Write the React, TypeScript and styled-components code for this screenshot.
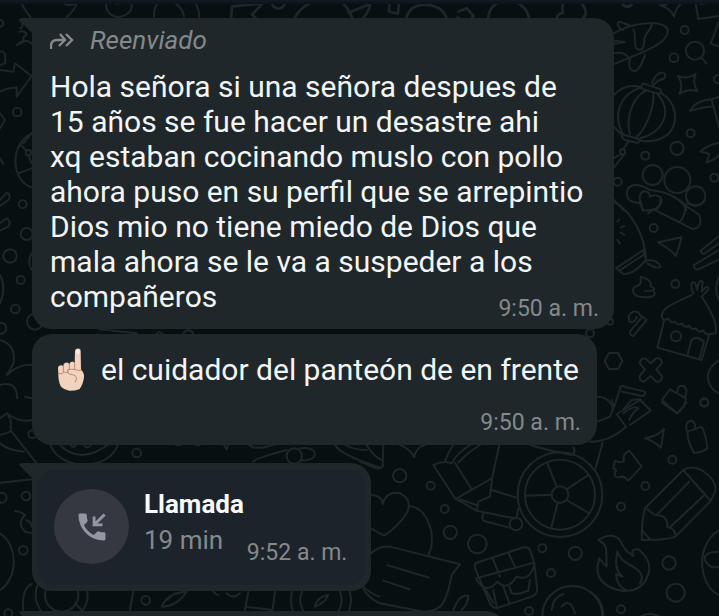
import React from "react";
import styled, { createGlobalStyle } from "styled-components";

const Global = createGlobalStyle`
  * { box-sizing: border-box; }
  html, body { margin: 0; background: #070f10; }
  body { font-family: Roboto, "Liberation Sans", sans-serif; color: #f1f5f6; }
  p, h2 { margin: 0; }
`;

const Chat = styled.main`
  position: relative;
  height: 100vh;
  overflow: hidden;
  padding: 18px 20px 0 32px;
  display: flex;
  flex-direction: column;
  align-items: flex-start;
`;

const Wallpaper = styled.svg`
  position: absolute;
  top: 0;
  left: 0;
  fill: none;
  stroke: #1e262c;
  stroke-width: 6;
  stroke-linecap: round;
  stroke-linejoin: round;
`;

const TopShade = styled.div`
  position: absolute;
  inset: 0 0 auto 0;
  height: 4px;
  background: linear-gradient(#111b22, #0a1316);
`;

const Bubble = styled.article<{ $tail?: boolean; $gap?: number }>`
  position: relative;
  flex: none;
  max-width: 100%;
  margin-top: ${(p) => p.$gap ?? 0}px;
  background: #20272a;
  border-radius: ${(p) => (p.$tail ? "0 20px 20px 20px" : "20px")};

  &::before {
    content: "";
    display: ${(p) => (p.$tail ? "block" : "none")};
    position: absolute;
    top: 0;
    left: -13px;
    width: 14px;
    height: 16px;
    background: inherit;
    border-top-left-radius: 3px;
    clip-path: polygon(0 0, 100% 0, 100% 100%, 0 12%);
  }
`;

const ForwardedBubble = styled(Bubble)`
  width: 582px;
  padding: 5px 15px 6px 18px;
`;

const ShortBubble = styled(Bubble)`
  padding: 18px 16px 8px 18px;
`;

const CallBubble = styled(Bubble)`
  padding: 6px;
`;

const NextBubble = styled(Bubble)`
  width: 474px;
  height: 60px;
`;

const Forwarded = styled.p`
  display: flex;
  align-items: center;
  gap: 16px;
  margin-bottom: 11px;
  font-size: 26px;
  line-height: 35px;
  font-style: italic;
  color: #84898c;
`;

const ForwardIcon = styled.svg`
  width: 24px;
  height: 20px;
  fill: none;
  stroke: #84898c;
  stroke-width: 2.4;
`;

const Body = styled.p`
  display: flow-root;
  font-size: 30px;
  line-height: 35px;
`;

const EmojiBody = styled(Body)`
  display: flex;
  align-items: center;
  padding-right: 2px;
`;

const Emoji = styled.svg`
  flex: none;
  width: 30px;
  height: 47px;
  margin: -6px 15px -6px 6px;
`;

const Time = styled.time`
  display: block;
  text-align: right;
  font-size: 23px;
  line-height: 28px;
  color: #84898c;
  white-space: nowrap;
`;

const InlineTime = styled(Time)`
  float: right;
  margin-top: 16px;
`;

const BelowTime = styled(Time)`
  margin-top: 22px;
`;

const CallPanel = styled.div`
  display: flex;
  align-items: center;
  min-height: 116px;
  padding: 17px 18px 18px 16px;
  border-radius: 16px;
  background: #1d232a;
`;

const CallBadge = styled.span`
  display: flex;
  align-items: center;
  justify-content: center;
  width: 75px;
  height: 75px;
  margin-right: 15px;
  border-radius: 50%;
  background: #353840;
  color: #9297a2;
`;

const CallText = styled.div`
  align-self: flex-start;
  font-size: 26px;
  line-height: 36px;
  color: #84898c;
`;

const CallTitle = styled.h2`
  font-size: 26px;
  line-height: 36px;
  font-weight: 700;
  color: #f7f9fb;
`;

const CallTime = styled(Time)`
  align-self: flex-end;
  margin-left: 3px;
`;

type Doodle = { at: string; d: string; dots: number[][] };

const doodles: Doodle[] = [
  {
    at: "translate(590 0) scale(.3333)",
    d: "M72 100C120 70 215 55 233 88C243 130 150 160 72 192M125 78C105 72 85 60 84 68C82 78 90 88 100 90M130 88C140 100 128 140 142 148C165 155 160 130 165 110C170 95 185 88 186 70M120 175C112 205 125 215 135 213C150 208 158 185 165 165M72 122L105 126L72 132M72 160C95 155 110 160 118 178M334 173L350 191M210 15C230 15 237 12 240 0M275 10C262 18 258 30 252 50C246 32 232 22 210 15M315 0L325 57L387 48M330 12L387 5M387 65L362 130L387 140M264 228Q290 240 317 222Q306 248 322 274Q294 264 268 282Q282 254 264 228ZM72 285C100 255 130 255 155 262M212 278C265 310 265 370 235 402C200 430 160 425 148 420M72 380Q85 397 95 402M152 262C75 290 75 360 98 400M170 270C115 300 110 370 120 402M190 278C195 330 160 395 140 410M205 285C250 340 215 400 150 415M160 250L212 268Q215 280 205 282L155 266Q152 255 160 250ZM95 402L148 418Q150 428 140 428L105 420Q92 412 95 402ZM185 250Q200 215 218 218Q232 222 222 235Q205 240 190 255M115 425L98 450M92 462L72 475M105 460L72 502M300 332Q320 300 365 298L387 290M300 332Q340 322 372 318M365 300L387 380M387 428Q350 435 332 455L358 462L350 488Q375 480 387 465M290 630C270 590 230 575 180 570C130 540 105 560 112 590C120 610 140 605 155 612M160 630C140 595 150 570 170 575Q180 580 180 590C195 580 220 590 214 608C205 630 180 630 175 640M72 600L100 630",
    dots: [[284,90,12],[252,173,13],[315,152,27],[384,238,12],[302,400,12],[261,445,20],[166,467,12],[188,525,30],[262,540,39],[317,588,29],[83,545,12],[373,533,12],[98,455,8],[110,0,18]],
  },
  {
    at: "translate(590 200) scale(.3333)",
    d: "M72 5C130 40 165 110 168 180M78 205L160 150L168 180Q130 225 100 222ZM88 212L165 162M168 182Q200 175 212 200Q205 210 172 190M82 65L88 58M92 82L103 78M92 98L103 105M82 120L90 130M150 0L158 32L200 28Q215 15 210 0M195 30L310 88Q340 80 328 45L285 15L270 0M285 15Q290 40 270 65M290 10Q330 25 345 0M204 127L275 112L258 168Q245 150 204 127ZM132 262C145 255 155 260 152 230C175 235 185 245 182 260C200 265 195 275 165 272M190 272C200 285 190 292 165 292C130 292 125 275 132 262M118 365C110 335 140 325 150 345L170 360L130 408Q115 405 122 392L155 352M118 365Q135 370 140 350M44 483L57 459L84 459L97 483L84 507L57 507ZM182 490L200 474Q218 475 215 490L199 508L217 530Q215 546 200 546L181 528L162 545Q147 543 149 528L165 509L149 490Q152 474 167 476ZM387 108L332 152Q335 165 345 160L387 130M387 150L312 195Q310 210 325 208L387 178M215 350C215 325 240 315 305 285M335 290C355 320 385 370 377 400L360 403Q345 405 340 392Q325 400 318 385Q305 392 298 378Q283 385 275 370Q262 378 255 365Q240 372 235 355Q220 365 215 350M310 280Q295 240 315 248L322 270Q325 235 338 245L335 275Q355 250 355 268L335 290M222 362L202 443L335 480L358 403M292 465L305 420Q320 405 342 425L328 478M387 230Q370 270 387 300M387 480Q330 520 370 570L387 580M72 622L92 560Q100 555 110 562L165 575Q165 590 155 588L95 575M100 630L125 600L150 598L180 630M22 590Q60 590 70 630M240 568L288 595Q285 620 262 640M240 568L216 600Q235 620 262 640M262 575Q262 555 280 558Q295 565 285 590",
    dots: [[191,84,12],[256,252,12],[343,607,12],[258,409,15],[60,365,9],[0,400,12]],
  },
  {
    at: "translate(590 400) scale(.3333)",
    d: "M22 65L60 50Q75 20 65 0M80 42L150 0L182 32L120 75M80 42L108 80Q60 125 0 125M100 40Q130 15 145 25Q125 40 118 60M38 128L15 210M216 8L262 40L290 8M165 115Q200 110 222 87L213 143Q190 122 165 115ZM293 95L335 80Q350 110 352 145Q330 160 312 158Q290 120 293 95ZM290 92Q285 62 305 62Q318 70 315 85M75 182Q95 192 102 182Q95 165 118 152L155 200L115 242Q100 225 90 232Q70 235 75 215Q85 210 70 205ZM165 325L280 210Q300 195 335 210Q385 245 375 275L362 303L258 408Q245 420 155 420Q155 360 165 325M280 210L362 303M298 245L200 345M340 288L240 382M172 328L195 345Q235 345 232 380Q255 385 256 405M157 392L180 418M25 420Q65 395 90 420Q100 450 130 468Q120 445 145 448Q180 475 178 510Q165 575 100 573Q20 560 22 500L28 475L50 500Q50 470 48 445Q45 430 25 420ZM82 455Q90 480 120 495Q170 520 150 550M82 455Q70 510 98 530L78 522Q80 560 110 572M387 390C310 440 330 560 387 585M387 455Q340 455 345 480Q360 510 387 500M0 575Q40 600 40 648M155 648Q180 636 205 648",
    dots: [[343,8,12],[247,179,12],[166,258,12],[93,320,12],[237,489,20],[257,578,27],[93,628,12]],
  },
  {
    at: "translate(360 430) scale(.3333)",
    d: "M575 194L497 197M590 170L562 100M620 178L685 135M620 210L685 248M593 218L575 290M220 105L285 205L350 242L355 215L390 200L397 140L418 45M220 105Q250 90 275 100M285 98L333 175M290 205L395 145M300 208L350 225M395 180L470 203M350 242L462 265M370 252Q362 268 375 274L448 293M475 235L470 262M255 95Q265 65 280 45M275 100Q290 70 330 45M295 98Q320 70 360 45M510 45Q560 60 635 75Q650 65 640 52M33 195Q65 195 68 222Q80 180 120 190Q160 210 140 250Q115 290 72 317L33 295M150 228Q200 235 215 310Q218 360 205 372M33 370Q60 345 90 350L300 403L275 435Q262 510 240 530Q220 545 190 545L60 520Q20 500 10 475M83 406L207 443M70 452L148 478M280 540Q300 490 325 498Q325 520 305 540M345 400L490 352Q505 350 510 360L523 400L532 480Q530 495 515 500L410 535Q395 532 390 520L345 415ZM348 445L522 398M398 385L420 440M445 368L465 410M350 450Q380 495 412 455Q440 485 470 440Q510 455 522 405M378 480L400 520M400 480L410 530M430 470L448 520M448 470L455 490Q475 495 505 482L510 450M575 540Q580 500 610 492M605 530Q630 500 645 550M70 45L68 110Q55 120 40 112L0 95M20 45Q40 80 65 90M120 45Q150 55 162 82Q170 50 195 45",
    dots: [[600,194,127],[600,194,105],[600,194,25],[468,282,19],[119,137,20],[212,167,12],[254,237,12],[271,307,20],[352,342,28],[547,355,12],[646,370,20],[573,429,12],[507,543,12],[637,558,90]],
  },
  {
    at: "translate(0 430) scale(.3333)",
    d: "M150 40C170 120 330 130 355 40M175 40Q240 110 330 40M35 5L110 100M0 40Q20 60 72 65M0 158L95 148M45 243Q65 245 75 255Q50 280 75 305L95 310M78 270Q95 275 95 290M0 310C60 350 50 450 0 480M70 540C65 500 75 470 95 462M225 520L245 540M400 485L390 540M485 530Q500 490 560 485Q530 530 485 530M500 510L525 490M640 485Q650 495 655 495M680 490Q700 510 720 490M745 485L735 540M735 530L818 540M825 485L818 540M945 530Q950 500 985 495Q975 520 945 530M1090 470Q1110 490 1138 500M520 40Q535 52 550 40M580 40Q595 52 605 40M670 42L680 58L685 42M745 42Q760 60 800 50L830 42M760 95Q765 85 860 60M900 55Q945 50 945 75Q940 90 905 92M1005 42Q1010 70 1138 112M1030 42Q1060 60 1100 60",
    dots: [[220,40,10],[262,40,12],[410,69,13],[97,13,12],[78,198,13],[5,203,15],[70,361,13],[437,511,13],[883,78,23],[185,495,78],[185,495,50],[963,510,90],[963,510,62],[25,550,12]],
  },
  {
    at: "scale(.3333)",
    d: "M62 0Q66 20 92 52M180 0Q200 30 250 0M235 0Q225 30 200 52M58 95Q75 90 80 105Q65 110 72 125L50 135M55 130Q75 115 95 130M60 60Q75 75 62 85M0 210L40 215L45 190L95 228L50 290L50 262Q20 265 0 275M0 155Q20 150 15 190L0 195M320 0Q310 40 350 52Q400 45 395 10M335 5Q350 20 380 0M462 52Q460 20 480 0M597 52Q600 20 575 0M510 0Q550 20 552 50",
    dots: [[52,336,13],[0,70,10]],
  },
  {
    at: "scale(.4585)",
    d: "M503 52L506 14L572 8L550 32L570 52M638 52Q650 10 700 0M740 0Q765 20 772 52M760 28L808 8Q805 30 780 52M850 3L870 5L868 30L848 25ZM885 52Q885 10 930 10Q975 15 975 52M920 52Q930 45 938 52M1000 25L1018 18L1033 35L1015 52L998 38M1065 52Q1060 5 1110 0Q1155 10 1155 52M1100 52L1107 42L1115 52M1215 52Q1210 30 1228 28Q1220 0 1250 2Q1275 0 1278 30Q1270 48 1250 45",
    dots: [[607,5,14],[1368,3,12]],
  },
  {
    at: "translate(0 100) scale(.3333)",
    d: "M95 100C30 130 30 240 95 262M62 135L80 152M55 220L95 205M70 130L95 100M85 166L95 190M0 300L20 278Q35 285 25 300L0 318M0 370L20 355Q35 365 25 380L0 392M0 40L15 60L0 85M0 175L10 192M0 525Q20 560 0 610M95 460Q80 485 95 510",
    dots: [[68,313,12],[80,402,18],[30,468,20],[62,540,12],[46,627,13],[3,685,16],[105,665,24],[85,158,8]],
  },
  {
    at: "translate(0 320) scale(.3333)",
    d: "M0 60Q50 75 40 130Q30 150 20 165Q60 130 95 135M0 195Q50 180 52 235M75 230L95 235M0 295L20 280Q60 310 95 300M22 280L32 300L32 335L0 345M300 28L410 40M470 42Q478 32 488 42M550 40Q565 20 580 40",
    dots: [],
  },
];

function Doodles() {
  return (
    <Wallpaper width="719" height="616" viewBox="0 0 719 616" aria-hidden="true">
      {doodles.map((g) => (
        <g key={g.at} transform={g.at}>
          <path d={g.d} />
          {g.dots.map(([cx, cy, r]) => (
            <circle key={`${cx}-${cy}-${r}`} cx={cx} cy={cy} r={r} />
          ))}
        </g>
      ))}
    </Wallpaper>
  );
}

function PointingHand() {
  return (
    <Emoji viewBox="50 20 90 140" role="img" aria-label="Mano con el índice hacia arriba">
      <path
        d="M107 35Q108 27 116 27Q124 27 124 35L125 90Q135 100 134 112Q132 135 120 149Q108 154 90 154Q75 152 65 142Q57 128 57 105L56 85Q57 78 64 77Q70 77 72 80L73 74Q76 69 82 69Q88 69 90 74Q92 66 99 66Q105 67 106 73Z"
        fill="#f3d3bf"
      />
      <path
        d="M72 80V100Q66 106 58 101M90 74V90M106 73V90M73 97Q78 103 88 97M85 91Q95 87 112 91Q118 94 124 93M85 91Q82 103 92 104Q105 105 110 111Q114 118 108 128"
        fill="none"
        stroke="#c08b70"
        strokeWidth="3"
        strokeLinecap="round"
      />
      <path d="M112 31H120V42Q116 45 112 42Z" fill="#fdeee4" />
    </Emoji>
  );
}

function IncomingCallIcon() {
  return (
    <svg width="36" height="36" viewBox="0 0 24 24" aria-hidden="true">
      <path
        fill="currentColor"
        d="M20 15.5c-1.25 0-2.45-.2-3.57-.57-.35-.11-.74-.03-1.02.24l-2.2 2.2c-2.83-1.44-5.15-3.75-6.59-6.59l2.2-2.21c.28-.26.36-.65.25-1C8.7 6.45 8.5 5.25 8.5 4c0-.55-.45-1-1-1H4c-.55 0-1 .45-1 1 0 9.39 7.61 17 17 17 .55 0 1-.45 1-1v-3.5c0-.55-.45-1-1-1z"
      />
      <path
        d="M13.4 5V10.6H19M13.6 10.4L20.4 3.6"
        fill="none"
        stroke="currentColor"
        strokeWidth="1.9"
      />
    </svg>
  );
}

export default function App() {
  return (
    <>
      <Global />
      <Chat>
        <Doodles />
        <TopShade />
        <ForwardedBubble $tail>
          <Forwarded>
            <ForwardIcon viewBox="0 0 24 20" aria-hidden="true">
              <path d="M1 18V15Q1 9 7 9H15M10 3L15 9L9 15M16 3L22 9L16 15" />
            </ForwardIcon>
            Reenviado
          </Forwarded>
          <Body>
            Hola señora si una señora despues de
            <br />
            15 años se fue hacer un desastre ahi
            <br />
            xq estaban cocinando muslo con pollo
            <br />
            ahora puso en su perfil que se arrepintio
            <br />
            Dios mio no tiene miedo de Dios que
            <br />
            mala ahora se le va a suspeder a los
            <br />
            compañeros
            <InlineTime>9:50 a. m.</InlineTime>
          </Body>
        </ForwardedBubble>
        <ShortBubble $gap={5}>
          <EmojiBody>
            <PointingHand />
            el cuidador del panteón de en frente
          </EmojiBody>
          <BelowTime>9:50 a. m.</BelowTime>
        </ShortBubble>
        <CallBubble $tail $gap={18}>
          <CallPanel>
            <CallBadge>
              <IncomingCallIcon />
            </CallBadge>
            <CallText>
              <CallTitle>Llamada</CallTitle>
              <p>19 min</p>
            </CallText>
            <CallTime>9:52 a. m.</CallTime>
          </CallPanel>
        </CallBubble>
        <NextBubble $tail $gap={20} />
      </Chat>
    </>
  );
}
